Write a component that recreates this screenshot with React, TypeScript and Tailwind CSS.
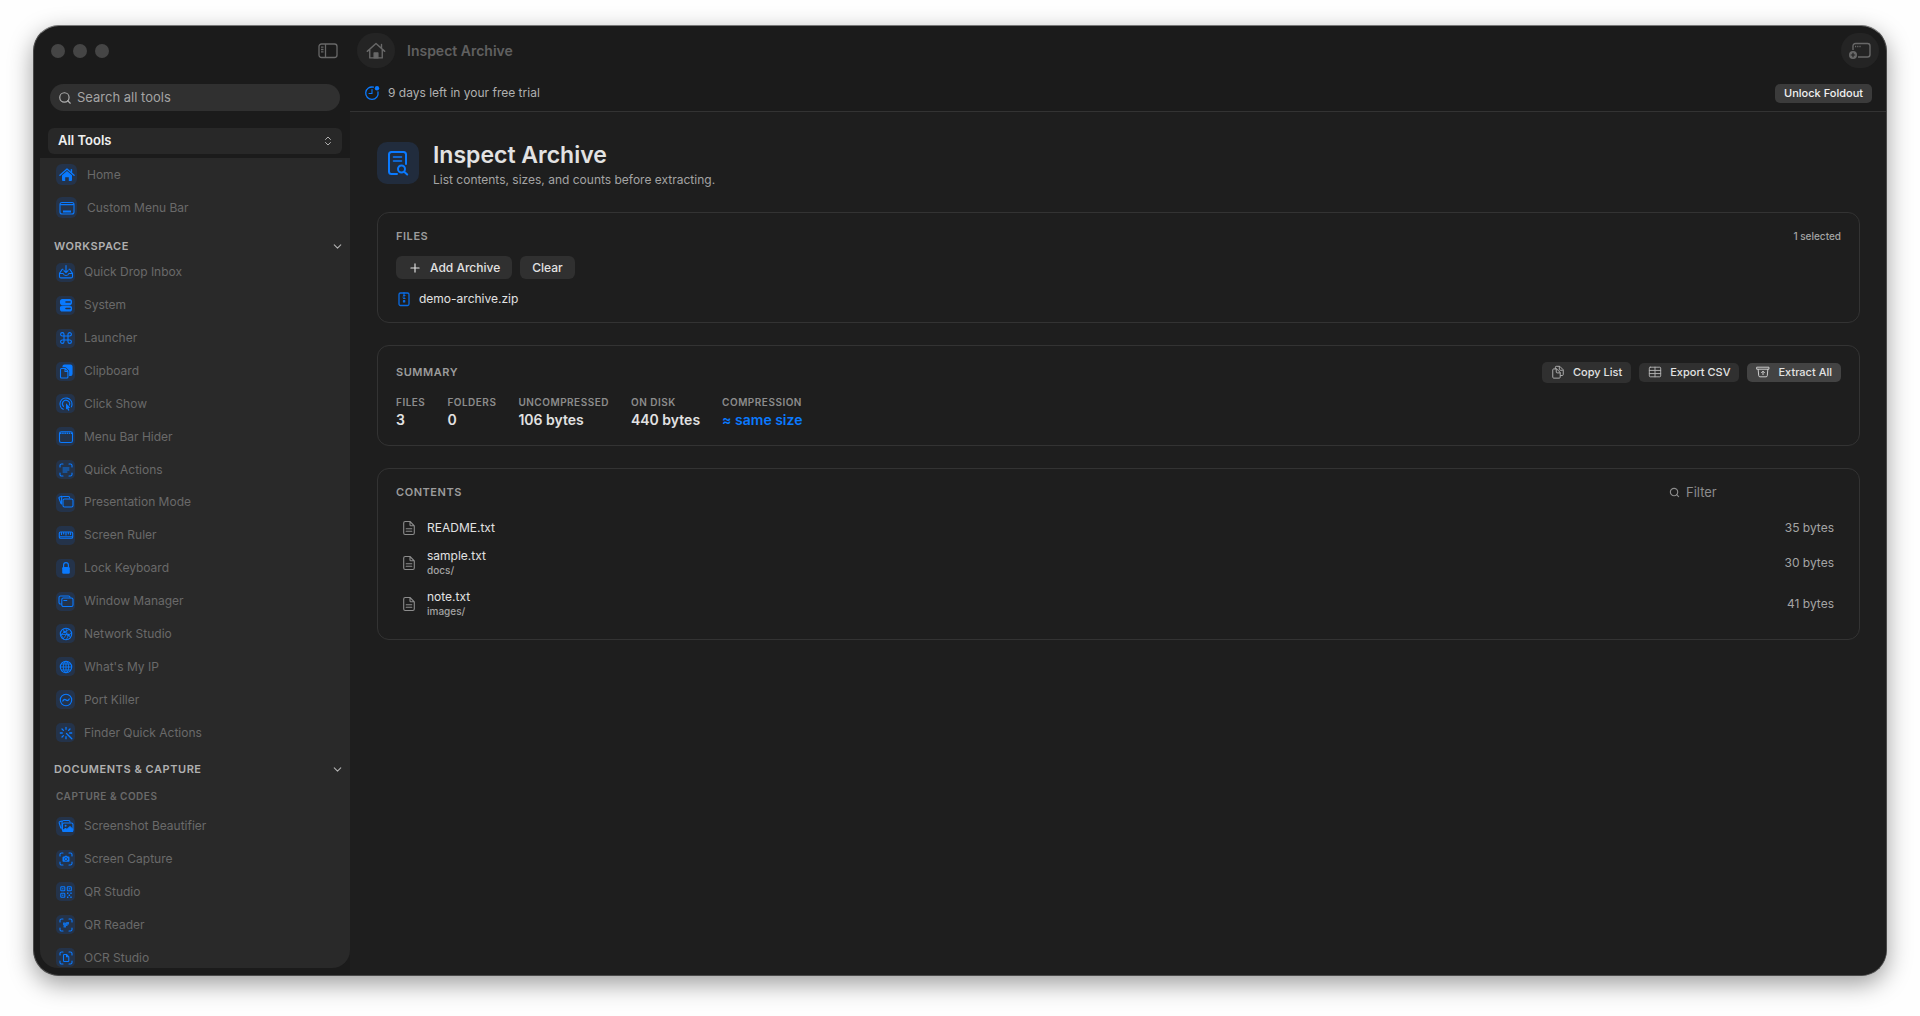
import type { ReactNode } from "react";
import { ChevronDown, ChevronsUpDown, Plus, Search } from "lucide-react";

type IconProps = { size?: number; className?: string; children: ReactNode };

// Every glyph is drawn on a 16 unit grid
function Glyph({ size = 16, className = "", children }: IconProps) {
  return (
    <svg
      width={size}
      height={size}
      viewBox="0 0 16 16"
      fill="none"
      stroke="currentColor"
      strokeWidth="1.1"
      strokeLinecap="round"
      strokeLinejoin="round"
      className={`shrink-0 ${className}`}
      aria-hidden="true"
    >
      {children}
    </svg>
  );
}

const corners = (
  <path d="M2 5V3.6C2 2.7 2.7 2 3.6 2H5M11 2h1.4c.9 0 1.6.7 1.6 1.6V5M14 11v1.4c0 .9-.7 1.6-1.6 1.6H11M5 14H3.6C2.7 14 2 13.3 2 12.4V11" />
);

const icons: Record<string, ReactNode> = {
  home: (
    <>
      <path d="M.9 8.3 8 2l7.1 6.3" strokeWidth="1.3" />
      <path d="M3 8.2 8 3.9l5 4.3V13a1 1 0 0 1-1 1H9.8v-3.8H6.2V14H4a1 1 0 0 1-1-1z" fill="currentColor" stroke="none" />
      <path d="M12.4 2.8v2.6" strokeWidth="1.5" />
    </>
  ),
  menubar: (
    <>
      <rect x="1" y="2.5" width="14" height="11.5" rx="2" />
      <path d="M1.5 4.6h13" />
      <path d="M4 11.5h8" strokeWidth="2" strokeLinecap="butt" />
    </>
  ),
  inbox: (
    <>
      <path d="M8 1.5v7M6 6.7l2 2 2-2" />
      <path d="M5 5.2H4.2L1.5 9.4v3.1c0 .8.6 1.4 1.4 1.4h10.2c.8 0 1.4-.6 1.4-1.4V9.4l-2.7-4.2H11" />
      <path d="M1.5 9.5h3.7c.3 1.3 1.4 2 2.8 2s2.5-.7 2.8-2h3.7" />
    </>
  ),
  system: (
    <>
      <rect x="2.5" y="2.5" width="11" height="5" rx="2" fill="currentColor" />
      <rect x="2.5" y="9" width="11" height="5" rx="2" fill="currentColor" />
      <path d="M8 5h4M8 11.5h4" stroke="#24334a" strokeWidth="1.6" />
    </>
  ),
  command: (
    <path d="M6 6h4v4H6zM6 6H4.300A1.700 1.700 0 1 1 6 4.300zM10 6V4.300A1.700 1.700 0 1 1 11.700 6zM10 10h1.700A1.700 1.700 0 1 1 10 11.700zM6 10v1.700A1.700 1.700 0 1 1 4.300 10z" />
  ),
  clipboard: (
    <>
      <path d="M5 3.5C5 2.400 5.700 2 6.500 2h6c1 0 1.500.6 1.500 1.500v7.500c0 .8-.5 1.500-1.500 1.500h-1.200V8.300L7.700 4.500H5z" fill="currentColor" />
      <path d="M7.300 5.500H3.500c-.6 0-1 .4-1 1V14c0 .6.4 1 1 1h5.400c.6 0 1-.4 1-1V8.200zM7 5.800v2.700h2.600" stroke="#24334a" strokeWidth="2.400" />
      <path d="M7.300 5.500H3.500c-.6 0-1 .4-1 1V14c0 .6.4 1 1 1h5.400c.6 0 1-.4 1-1V8.200zM7 5.800v2.700h2.600" fill="#24334a" />
    </>
  ),
  click: (
    <>
      <path d="M5.200 13.300A6 6 0 1 1 14 8.200c0 1-.2 1.900-.6 2.600" />
      <path d="M5.500 10.400a3.600 3.600 0 1 1 5.900-1.300" />
      <path d="m8 7.300 4.300 4.500-1.900.1 1 2.300-1.200.5-1-2.300L8 13.600z" fill="currentColor" stroke="none" />
    </>
  ),
  hider: (
    <>
      <rect x="1.500" y="2.700" width="13" height="10.800" rx="1.800" />
      <path d="M2 4.300h12" strokeWidth="1.500" strokeDasharray="1.500 .7" strokeLinecap="butt" />
    </>
  ),
  quick: (
    <>
      {corners}
      <path d="M5 6h6M5 8h6M5 10h4" strokeWidth=".9" />
    </>
  ),
  presentation: (
    <>
      <path d="m3 9.500-2-5.200C.8 3.700 1.100 3.200 1.700 3l2-.6" />
      <path d="M3.600 9.900V4.100C3.600 3.100 4.200 2.500 5.100 2.500h5.200c.9 0 1.400.5 1.400 1.400" />
      <rect x="5" y="5" width="10" height="8" rx="1.500" />
    </>
  ),
  ruler: (
    <>
      <rect x="1.300" y="5" width="13.400" height="6.200" rx="1.300" />
      <path d="M3.500 5.500v2M5.700 5.500v1.500M8 5.500v2.500M10.300 5.500v1.500M12.500 5.500v2" strokeWidth="1.200" />
      <path d="M2 9.800h12" strokeWidth="1" />
    </>
  ),
  lock: (
    <>
      <rect x="4.200" y="7" width="7.600" height="6.800" rx="1.300" fill="currentColor" stroke="none" />
      <path d="M5.600 7.500V5a2.400 2.400 0 0 1 4.800 0v2.500" strokeWidth="1.200" />
    </>
  ),
  windows: (
    <>
      <path d="M3.300 11H2.500C1.600 11 1 10.400 1 9.500v-5C1 3.600 1.600 3 2.500 3h8c.9 0 1.500.5 1.500 1.300" />
      <rect x="3.800" y="5" width="11.200" height="8.500" rx="1.500" />
      <path d="M5.800 7.500h3" />
    </>
  ),
  network: (
    <>
      <circle cx="8" cy="8" r="5.700" />
      <path d="M5 3.300 6.500 6 11 3.500M6.500 6 3 8.500l2.500 4.300M6.500 6l4 3 3-2M10.500 9l-2 4.500M3 8.500h5L10.500 9l2 2.500M8 2.500l1 5-3.500 5" strokeWidth=".8" />
      <circle cx="6.500" cy="6" r="1.200" fill="currentColor" stroke="none" />
      <circle cx="10.500" cy="9" r="1.200" fill="currentColor" stroke="none" />
    </>
  ),
  globe: (
    <>
      <circle cx="8" cy="8" r="5.700" />
      <ellipse cx="8" cy="8" rx="2.700" ry="5.700" strokeWidth=".9" />
      <path d="M8 2.300v11.400M2.300 8h11.400M3.300 5h9.400M3.300 11h9.400" strokeWidth=".9" />
    </>
  ),
  port: (
    <>
      <circle cx="8" cy="8" r="5.700" />
      <path d="M4.800 9c.8-1.600 1.900-2 3.200-1s2.400.6 3.200-1" strokeWidth="1.300" />
    </>
  ),
  rays: (
    <path d="M8 2.300v2M8 11.700v2M2.300 8h2M11.700 8h2M4 4l1.400 1.400M12 4l-1.400 1.400M4 12l1.400-1.400M8.500 8.500l5.300 5.300" strokeWidth="1.300" />
  ),
  beautifier: (
    <>
      <path d="m2.800 10-1.600-5c-.2-.7.1-1.200.7-1.400l2-.6M4 11V4.500C4 3 4.800 2.500 5.600 2.500h4.900c.9 0 1.500.5 1.500 1.400" />
      <rect x="4.500" y="5" width="10.500" height="8.500" rx="1.500" />
      <path d="m4.800 12.500 2.700-2 1.500 1 3-2.800 2.600 2.500v2.300H5z" fill="currentColor" />
      <circle cx="7.600" cy="7.800" r="1" fill="currentColor" stroke="none" />
    </>
  ),
  capture: (
    <>
      {corners}
      <path d="M4.500 6.500c0-.6.400-.9 1-.9h1l.5-.8h2l.5.800h1c.6 0 1 .3 1 .9v3.300c0 .6-.4 1-1 1h-5c-.6 0-1-.4-1-1z" fill="currentColor" stroke="none" />
      <circle cx="8" cy="8.100" r="1.600" stroke="#24334a" strokeWidth=".6" />
    </>
  ),
  qr: (
    <>
      <rect x="2.800" y="2.800" width="4" height="4" rx=".6" />
      <rect x="9.300" y="2.800" width="4" height="4" rx=".6" />
      <rect x="2.800" y="9.300" width="4" height="4" rx=".6" />
      <path d="M4.300 4.800h1M10.800 4.800h1M4.300 11.300h1M9 9.300h1.400M12.300 9.300h1.400M10.600 11.300h1.500M9 13.300h1.400M12.300 13.300h1.400" strokeWidth="1.500" strokeLinecap="butt" />
    </>
  ),
  reader: (
    <>
      {corners}
      <path d="M5 5.500h2.500V8H5zM8.500 5H11v2.500H9.500V9H8v1.500H5.500V8.500" fill="currentColor" stroke="none" opacity=".8" />
    </>
  ),
  ocr: (
    <>
      {corners}
      <path d="M8.500 4.500H6.200c-.4 0-.7.3-.7.700v5.600c0 .4.3.7.7.7h3.900c.4 0 .7-.3.7-.7V6.800zV6.800h2.300" />
    </>
  ),
};

const topTools = [
  { icon: "home", label: "Home" },
  { icon: "menubar", label: "Custom Menu Bar" },
];

const workspace = [
  { icon: "inbox", label: "Quick Drop Inbox" },
  { icon: "system", label: "System" },
  { icon: "command", label: "Launcher" },
  { icon: "clipboard", label: "Clipboard" },
  { icon: "click", label: "Click Show" },
  { icon: "hider", label: "Menu Bar Hider" },
  { icon: "quick", label: "Quick Actions" },
  { icon: "presentation", label: "Presentation Mode" },
  { icon: "ruler", label: "Screen Ruler" },
  { icon: "lock", label: "Lock Keyboard" },
  { icon: "windows", label: "Window Manager" },
  { icon: "network", label: "Network Studio" },
  { icon: "globe", label: "What's My IP" },
  { icon: "port", label: "Port Killer" },
  { icon: "rays", label: "Finder Quick Actions" },
];

const capture = [
  { icon: "beautifier", label: "Screenshot Beautifier" },
  { icon: "capture", label: "Screen Capture" },
  { icon: "qr", label: "QR Studio" },
  { icon: "reader", label: "QR Reader" },
  { icon: "ocr", label: "OCR Studio" },
];

const stats = [
  { label: "FILES", value: "3" },
  { label: "FOLDERS", value: "0" },
  { label: "UNCOMPRESSED", value: "106 bytes" },
  { label: "ON DISK", value: "440 bytes" },
  { label: "COMPRESSION", value: "≈ same size", accent: true },
];

const entries = [
  { name: "README.txt", folder: "", size: "35 bytes" },
  { name: "sample.txt", folder: "docs/", size: "30 bytes" },
  { name: "note.txt", folder: "images/", size: "41 bytes" },
];

function ToolList({ items, className }: { items: { icon: string; label: string }[]; className: string }) {
  return (
    <ul className={`grid auto-rows-fr ${className}`}>
      {items.map((item) => (
        <li key={item.label} className="flex min-h-0">
          <a href="#" className="flex items-center gap-[9px] pl-4 text-xs text-[#6a6a6a]">
            <span className="flex size-[19px] items-center justify-center rounded-[5px] bg-[#24334a] text-[#0a7aff]">
              <Glyph>{icons[item.icon]}</Glyph>
            </span>
            {item.label}
          </a>
        </li>
      ))}
    </ul>
  );
}

function SectionHeader({ title }: { title: string }) {
  return (
    <button className="flex h-5 w-full items-center justify-between pl-[14px] pr-[6px] text-[11px] font-semibold tracking-wider text-[#b0b0b0]">
      {title}
      <ChevronDown size={13} />
    </button>
  );
}

function Sidebar() {
  return (
    <aside className="flex w-[316px] shrink-0 flex-col pb-[7px] pl-[6px]">
      <div className="flex h-[49px] shrink-0 items-center justify-between pl-[11px] pr-3">
        <div className="flex gap-2">
          <span className="size-[14px] rounded-full bg-[#454545]" />
          <span className="size-[14px] rounded-full bg-[#454545]" />
          <span className="size-[14px] rounded-full bg-[#454545]" />
        </div>
        <button aria-label="Toggle sidebar" className="text-[#686868]">
          <svg width="20" height="16" viewBox="0 0 20 16" fill="none" stroke="currentColor" strokeWidth="1.300">
            <rect x="1" y="1" width="18" height="13.500" rx="2.500" />
            <path d="M7.500 1v13.500M3 4.200h2.500M3 6.500h2.500M3 8.800h2.500" />
          </svg>
        </button>
      </div>

      <label className="mx-[10px] mt-[9px] flex h-[27px] shrink-0 items-center gap-[5px] rounded-full bg-[#303030] px-2 text-[#b0b0b0]">
        <Search size={14} strokeWidth={2} />
        <input
          type="search"
          aria-label="Search all tools"
          placeholder="Search all tools"
          className="min-w-0 flex-1 bg-transparent text-[13px] outline-none placeholder:text-[#a4a4a4]"
        />
      </label>

      <button className="mx-2 mt-[17px] flex h-[26px] shrink-0 items-center justify-between rounded-md bg-[#282828] pl-[10px] pr-2 text-[13px] font-semibold text-[#f0f0f0]">
        All Tools
        <ChevronsUpDown size={12} className="text-[#b0b0b0]" />
      </button>

      <nav className="mt-1 min-h-0 flex-1 overflow-hidden rounded-b-[18px] bg-[#292929]">
        {topTools.map((item) => (
          <a key={item.label} href="#" className="flex h-[33px] items-center gap-[10px] pl-4 text-xs text-[#6a6a6a]">
            <span className="flex size-[21px] items-center justify-center rounded-md bg-[#24334a] text-[#0a7aff]">
              <Glyph>{icons[item.icon]}</Glyph>
            </span>
            {item.label}
          </a>
        ))}
        <div className="mt-3">
          <SectionHeader title="WORKSPACE" />
          <ToolList items={workspace} className="h-[493px]" />
        </div>
        <div className="mt-[10px]">
          <SectionHeader title="DOCUMENTS & CAPTURE" />
          <h3 className="pt-[9px] pb-[6px] pl-4 text-[10px] leading-4 font-semibold tracking-wider text-[#6a6a6a]">CAPTURE &amp; CODES</h3>
          <ToolList items={capture} className="h-[164px]" />
        </div>
      </nav>
    </aside>
  );
}

function Card({ children }: { children: ReactNode }) {
  return <section className="rounded-xl border border-[#333] px-[18px]">{children}</section>;
}

function CardTitle({ children }: { children: ReactNode }) {
  return <h2 className="text-[11px] leading-4 font-semibold tracking-wider text-[#9c9c9c]">{children}</h2>;
}

function FileIcon() {
  return (
    <Glyph size={16} className="text-[#8c8c8c]">
      <path d="M9 1.500H4.200c-.9 0-1.500.6-1.500 1.500v10c0 .9.600 1.500 1.500 1.500h7.600c.9 0 1.500-.6 1.500-1.500V5.800zV5c0 .5.300.8.800.8h3.500M5.200 8.800h5.600M5.200 11.300h5.600" />
    </Glyph>
  );
}

export default function App() {
  return (
    <div className="h-screen bg-[#fefefe] px-[33px] pt-[25px] pb-10 font-['Inter',sans-serif]">
      <div className="flex h-full overflow-hidden rounded-[26px] border border-[#4a4a4a] border-t-[#777] bg-[#1b1b1b] shadow-[0_8px_24px_rgba(0,0,0,0.38)]">
        <Sidebar />

        <main className="flex min-w-0 flex-1 flex-col">
          <header className="flex h-[49px] shrink-0 items-center px-[7px]">
            <button aria-label="Home" className="flex h-[35px] w-[38px] items-center justify-center rounded-full bg-[#242424] text-[#686868]">
              <Glyph size={20}>
                <path d="M1 8.300 8 2l7 6.300M3 7v6.500h10V7M12.400 2.800v2.800" />
                <path d="M6.500 9.500h3v4h-3z" fill="currentColor" />
              </Glyph>
            </button>
            <h1 className="ml-3 text-[14px] font-semibold text-[#606060]">Inspect Archive</h1>
            <button aria-label="Add window" className="ml-auto flex h-[35px] w-[38px] items-center justify-center rounded-full bg-[#242424] text-[#686868]">
              <svg width="24" height="18" viewBox="0 0 24 18" fill="none" stroke="currentColor" strokeWidth="1.400">
                <path d="M5 8V4c0-1.500 1-2.500 2.500-2.500h12C21 1.500 22 2.500 22 4v8.500c0 1.500-1 2.500-2.500 2.500H10" />
                <path d="M7 4.500h6" strokeDasharray="1.200 1" />
                <circle cx="5" cy="13" r="4" fill="currentColor" stroke="none" />
                <path d="M5 10.800v4.400M2.800 13h4.400" stroke="#242424" strokeWidth="1.200" />
              </svg>
            </button>
          </header>

          <div className="flex h-[37px] shrink-0 items-center border-b border-[#333] px-[14px]">
            <Glyph size={16} className="text-[#0a7aff]">
              <path d="M9.500 2.200A6.200 6.200 0 1 0 14 7" strokeWidth="1.300" />
              <path d="M8 4.500V8.500H5" />
              <circle cx="13" cy="3.300" r="2.200" fill="currentColor" stroke="none" />
            </Glyph>
            <p className="ml-2 text-xs text-[#b0b0b0]">9 days left in your free trial</p>
            <button className="ml-auto h-[19px] rounded-[5px] bg-[#3b3b3b] px-[9px] text-[11px] font-medium text-[#f0f0f0]">Unlock Foldout</button>
          </div>

          <div className="flex min-h-0 flex-1 flex-col gap-[22px] bg-[#1e1e1e] pt-[30px] pr-[26px] pl-[27px]">
            <div className="flex h-[48px] items-start">
              <div className="flex size-[42px] items-center justify-center rounded-[10px] bg-[#212c3d] text-[#0a7aff]">
                <svg width="24" height="26" viewBox="0 0 24 26" fill="none" stroke="currentColor" strokeWidth="2" strokeLinecap="round" strokeLinejoin="round">
                  <path d="M11 24H5.500C4 24 3 23 3 21.500v-17C3 3 4 2 5.500 2h12C19 2 20 3 20 4.500V14" />
                  <path d="M7.500 7h8M7.500 11h8" strokeWidth="1.600" />
                  <circle cx="15.500" cy="19" r="3.500" />
                  <path d="m18.200 21.700 3 2.800" />
                </svg>
              </div>
              <div className="ml-[14px]">
                <h2 className="text-[23px] leading-[26px] font-semibold text-[#e2e2e2]">Inspect Archive</h2>
                <p className="mt-[2px] text-xs leading-5 text-[#a4a4a4]">List contents, sizes, and counts before extracting.</p>
              </div>
            </div>

            <Card>
              <div className="flex h-[46px] items-center justify-between">
                <CardTitle>FILES</CardTitle>
                <span className="text-[10px] font-medium text-[#a4a4a4]">1 selected</span>
              </div>
              <div className="-mt-[3px] flex gap-2 text-xs font-medium text-[#e2e2e2]">
                <button className="flex h-[23px] items-center gap-2 rounded-md bg-[#303030] px-3">
                  <Plus size={14} strokeWidth={2} />
                  Add Archive
                </button>
                <button className="h-[23px] rounded-md bg-[#303030] px-3">Clear</button>
              </div>
              <div className="mt-[10px] mb-[13px] flex h-5 items-center gap-[7px] text-xs text-[#e2e2e2]">
                <Glyph size={16} className="text-[#0a6ae0]">
                  <rect x="3" y="2" width="10" height="12.500" rx="1.500" strokeWidth="1.300" />
                  <path d="M8 1.500v2M7.500 4.500H9M7 6h1.500M7.500 7.500H9M7.500 9.500h1.200V11H7.500z" strokeWidth="1.200" />
                </Glyph>
                demo-archive.zip
              </div>
            </Card>

            <Card>
              <div className="flex h-[52px] items-center justify-between">
                <CardTitle>SUMMARY</CardTitle>
                <div className="flex items-center gap-2 text-[11px] font-medium text-[#e2e2e2]">
                  <button className="flex h-[21px] items-center gap-2 rounded-[5px] bg-[#303030] px-[9px]">
                    <Glyph size={14} className="text-[#b0b0b0]">
                      <path d="M6 4.500H3c-.6 0-1 .4-1 1V14c0 .6.400 1 1 1h6.500c.6 0 1-.4 1-1V9zV8c0 .6.300 1 1 1h3.500M5 4V2.500c0-.6.400-1 1-1h4l4 4V11c0 .6-.4 1-1 1h-2M9.500 2v3c0 .6.300 1 1 1H13" />
                    </Glyph>
                    Copy List
                  </button>
                  <button className="flex h-[19px] items-center gap-2 rounded-[5px] bg-[#303030] px-[9px]">
                    <Glyph size={14} className="text-[#b0b0b0]">
                      <path d="M2.500 2.500h11c.6 0 1 .4 1 1v9c0 .6-.4 1-1 1h-11c-.6 0-1-.4-1-1v-9c0-.6.400-1 1-1zM1.500 6.200h13M1.500 9.800h13M8 2.500v11" />
                    </Glyph>
                    Export CSV
                  </button>
                  <button className="flex h-[19px] items-center gap-2 rounded-[5px] bg-[#434343] px-[9px]">
                    <Glyph size={14} className="text-[#d0d0d0]">
                      <path d="M1.200 2.500h13.600v2.300H1.200zM2.500 5l.6 7.200c.1.900.6 1.300 1.500 1.300h6.800c.9 0 1.400-.4 1.500-1.300L13.500 5M8 11V7.300M6.300 8.800 8 7.100l1.700 1.700" />
                    </Glyph>
                    Extract All
                  </button>
                </div>
              </div>
              <dl className="-mt-1 flex gap-[22px] pb-[15px]">
                {stats.map((stat) => (
                  <div key={stat.label}>
                    <dt className="text-[10px] leading-4 font-semibold tracking-wider text-[#8c8c8c]">{stat.label}</dt>
                    <dd className={`text-[14px] leading-5 font-semibold ${stat.accent ? "text-[#0a7aff]" : "text-[#e2e2e2]"}`}>{stat.value}</dd>
                  </div>
                ))}
              </dl>
            </Card>

            <Card>
              <div className="flex h-[46px] items-center justify-between">
                <CardTitle>CONTENTS</CardTitle>
                <label className="flex w-[172px] items-center gap-[6px] text-[#8c8c8c]">
                  <Search size={11} strokeWidth={2.5} />
                  <input aria-label="Filter" placeholder="Filter" className="min-w-0 flex-1 bg-transparent text-[13px] leading-5 outline-none placeholder:text-[#8c8c8c]" />
                </label>
              </div>
              <table className="-mt-px mb-[15px] w-full">
                <tbody>
                  {entries.map((entry) => (
                    <tr key={entry.name} className={entry.folder ? "h-[41px]" : "h-7"}>
                      <td className="w-[31px] pl-[5px]">
                        <FileIcon />
                      </td>
                      <td className="text-xs leading-[14px] text-[#e2e2e2]">
                        {entry.name}
                        {entry.folder && <div className="text-[10px] font-medium text-[#a4a4a4]">{entry.folder}</div>}
                      </td>
                      <td className="pr-[7px] text-right text-xs text-[#a4a4a4]">{entry.size}</td>
                    </tr>
                  ))}
                </tbody>
              </table>
            </Card>
          </div>
        </main>
      </div>
    </div>
  );
}
